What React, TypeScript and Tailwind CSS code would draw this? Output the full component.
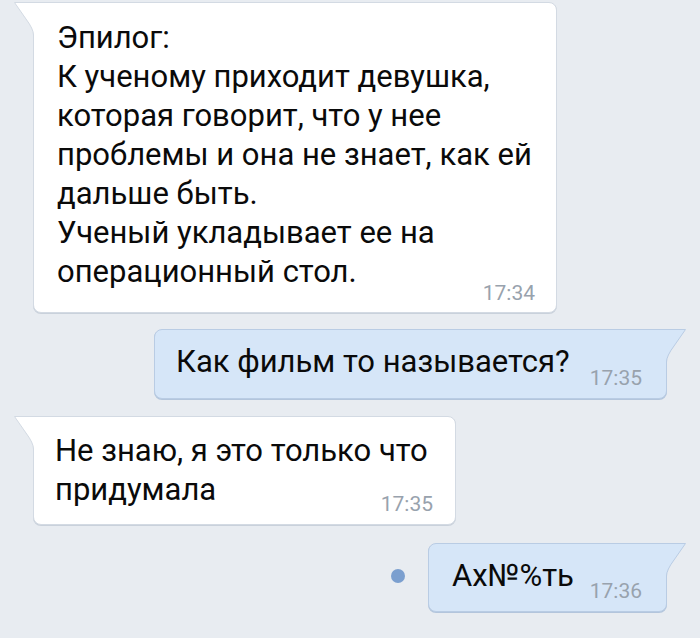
const font = { fontFamily: "Roboto, 'Noto Sans', sans-serif" };

const LeftTail = () => (
  <svg
    className="absolute top-[-1px] left-[-20px]"
    width="22"
    height="36"
    viewBox="0 0 22 36"
  >
    <path d="M0.5 0.5 L22 0.5 L22 36 L19.5 36 L19.5 33 Q19.5 27 12 17 Z" fill="#ffffff" />
    <path d="M22 0.5 L0.5 0.5 L12 17 Q19.5 27 19.5 33 L19.5 36" fill="none" stroke="#d3dae3" strokeWidth="1" />
  </svg>
);

const RightTail = () => (
  <svg
    className="absolute top-[-1px] right-[-20px]"
    width="22"
    height="36"
    viewBox="0 0 22 36"
  >
    <path d="M21.5 0.5 L0 0.5 L0 36 L2.5 36 L2.5 33 Q2.5 27 10 17 Z" fill="#d6e6f8" />
    <path d="M0 0.5 L21.5 0.5 L10 17 Q2.5 27 2.5 33 L2.5 36" fill="none" stroke="#b9cce4" strokeWidth="1" />
  </svg>
);

const Time = ({ t, className = "" }: { t: string; className?: string }) => (
  <span className={`text-[21px] text-[#98a2ad] relative ${className}`}>{t}</span>
);

export default function App() {
  return (
    <div
      style={font}
      className="w-[700px] h-[638px] bg-[#e8ecf1] overflow-hidden flex flex-col text-[31px] leading-[39px] text-[#0a0a0a]"
    >
      {/* message 1 */}
      <div className="mt-[2px] ml-[33px] w-[524px] h-[311px] relative bg-white border border-[#d3dae3] rounded-lg rounded-tl-none shadow-[0_1px_0_#c9d1db] pl-[23px] pr-[21px] pt-[15px] whitespace-nowrap">
        <LeftTail />
        <div>Эпилог:</div>
        <div>К ученому приходит девушка,</div>
        <div>которая говорит, что у нее</div>
        <div>проблемы и она не знает, как ей</div>
        <div>дальше быть.</div>
        <div>Ученый укладывает ее на</div>
        <div className="flex items-baseline justify-between">
          <span>операционный стол.</span>
          <Time t="17:34" className="top-[18px]" />
        </div>
      </div>

      {/* message 2 */}
      <div className="mt-[16px] self-end mr-[33px] w-[513px] h-[70px] relative bg-[#d6e6f8] border border-[#b9cce4] rounded-lg rounded-tr-none shadow-[0_1px_0_#b3c5dc] pl-[21px] pr-[24px] pt-[12px] flex items-baseline justify-between whitespace-nowrap">
        <RightTail />
        <span>Как фильм то называется?</span>
        <Time t="17:35" className="top-[13px]" />
      </div>

      {/* message 3 */}
      <div className="mt-[17px] ml-[33px] w-[423px] h-[109px] relative bg-white border border-[#d3dae3] rounded-lg rounded-tl-none shadow-[0_1px_0_#c9d1db] pl-[21px] pr-[22px] pt-[14px] whitespace-nowrap">
        <LeftTail />
        <div>Не знаю, я это только что</div>
        <div className="flex items-baseline justify-between">
          <span>придумала</span>
          <Time t="17:35" className="top-[11px]" />
        </div>
      </div>

      {/* message 4 */}
      <div className="mt-[18px] self-end mr-[33px] flex items-center">
        <div className="w-[14px] h-[14px] rounded-full bg-[#7b9fcf] mr-[23px] mb-[4px]" />
        <div className="w-[239px] h-[69px] relative bg-[#d6e6f8] border border-[#b9cce4] rounded-lg rounded-tr-none shadow-[0_1px_0_#b3c5dc] pl-[23px] pr-[24px] pt-[12px] flex items-baseline justify-between whitespace-nowrap">
          <RightTail />
          <span>Ах№%ть</span>
          <Time t="17:36" className="top-[12px]" />
        </div>
      </div>
    </div>
  );
}
